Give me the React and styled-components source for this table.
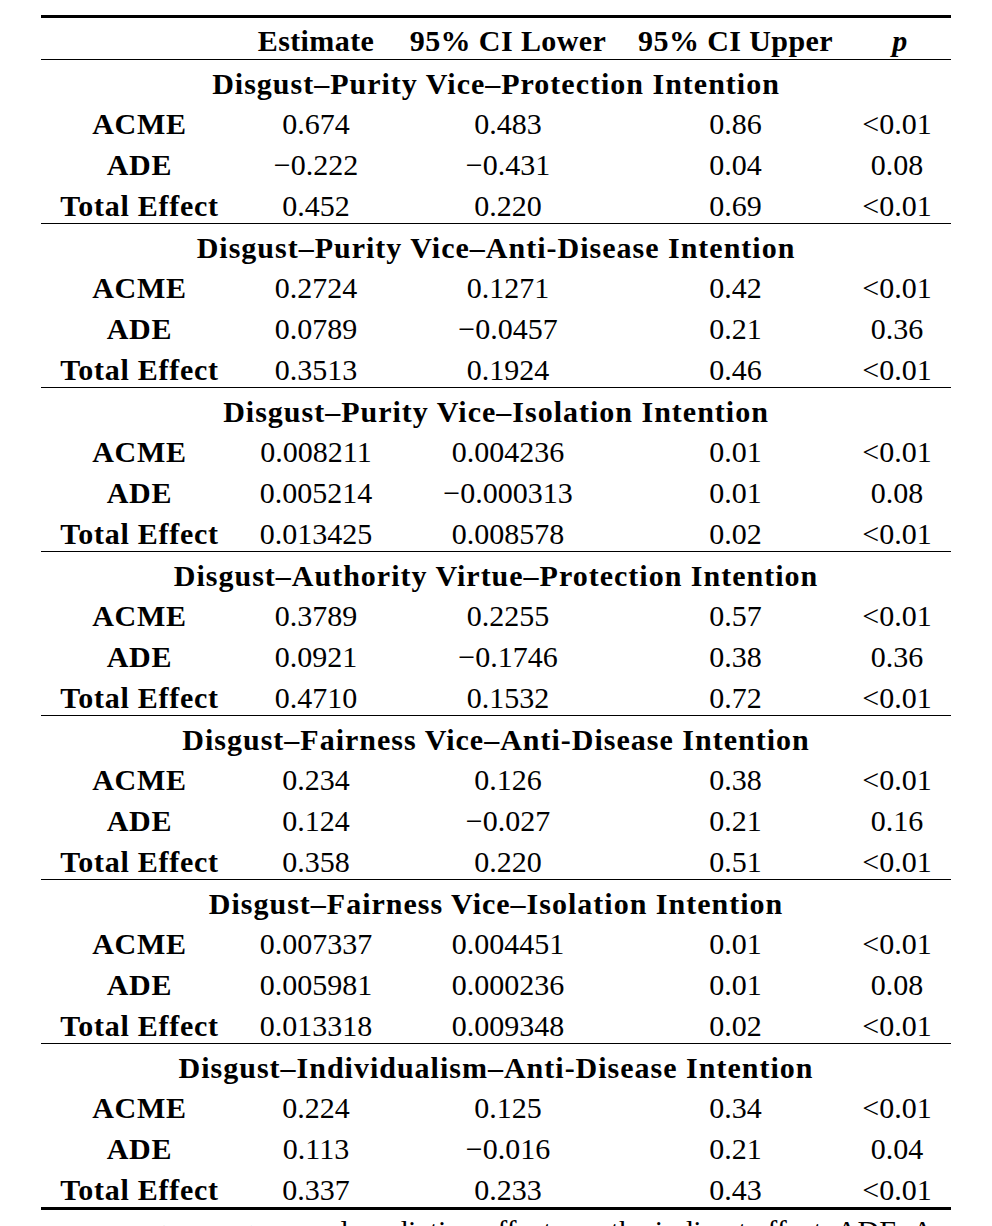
import React from "react";
import styled, { createGlobalStyle } from "styled-components";

const Global = createGlobalStyle`
  html, body { margin: 0; padding: 0; background: #fff; }
  body { font-family: "Liberation Serif", "Times New Roman", serif; color: #000; }
`;

const Page = styled.div`
  width: 992px;
  height: 1226px;
  overflow: hidden;
  padding: 15px 0 0 41px;
  box-sizing: border-box;
`;

const Table = styled.div`
  width: 910px;
  display: flex;
  flex-direction: column;
  border-top: 3px solid #000;
  border-bottom: 3px solid #000;
`;

const Row = styled.div`
  display: grid;
  grid-template-columns: 197px 156px 228px 227px 102px;
  height: 41px;
  box-sizing: border-box;
  font-size: 30px;
  line-height: 35px;
  padding-top: ${(p) => (p.$head ? 5 : 6)}px;
  font-weight: ${(p) => (p.$head ? 700 : 400)};
  letter-spacing: ${(p) => (p.$head ? "0.4px" : "0")};
`;

const Cell = styled.div`
  text-align: center;
  white-space: nowrap;
  font-weight: ${(p) => (p.$bold ? 700 : "inherit")};
  font-style: ${(p) => (p.$italic ? "italic" : "normal")};
  letter-spacing: ${(p) => (p.$bold ? "0.75px" : "inherit")};
  transform: translateX(${(p) => p.$dx || 0}px);
`;

const SectionTitle = styled.div`
  height: 41px;
  box-sizing: border-box;
  border-top: 1.5px solid #000;
  font-size: 30px;
  font-weight: 700;
  line-height: 35px;
  padding-top: 6px;
  letter-spacing: 1px;
  text-align: center;
  white-space: nowrap;
`;

const Caption = styled.p`
  margin: 4px 0 0 0;
  font-size: 30px;
  line-height: 34px;
  white-space: nowrap;
  padding-left: 43px;
`;

const sections = [
  {
    title: "Disgust–Purity Vice–Protection Intention",
    rows: [
      ["ACME", "0.674", "0.483", "0.86", "<0.01"],
      ["ADE", "−0.222", "−0.431", "0.04", "0.08"],
      ["Total Effect", "0.452", "0.220", "0.69", "<0.01"],
    ],
  },
  {
    title: "Disgust–Purity Vice–Anti-Disease Intention",
    rows: [
      ["ACME", "0.2724", "0.1271", "0.42", "<0.01"],
      ["ADE", "0.0789", "−0.0457", "0.21", "0.36"],
      ["Total Effect", "0.3513", "0.1924", "0.46", "<0.01"],
    ],
  },
  {
    title: "Disgust–Purity Vice–Isolation Intention",
    rows: [
      ["ACME", "0.008211", "0.004236", "0.01", "<0.01"],
      ["ADE", "0.005214", "−0.000313", "0.01", "0.08"],
      ["Total Effect", "0.013425", "0.008578", "0.02", "<0.01"],
    ],
  },
  {
    title: "Disgust–Authority Virtue–Protection Intention",
    rows: [
      ["ACME", "0.3789", "0.2255", "0.57", "<0.01"],
      ["ADE", "0.0921", "−0.1746", "0.38", "0.36"],
      ["Total Effect", "0.4710", "0.1532", "0.72", "<0.01"],
    ],
  },
  {
    title: "Disgust–Fairness Vice–Anti-Disease Intention",
    rows: [
      ["ACME", "0.234", "0.126", "0.38", "<0.01"],
      ["ADE", "0.124", "−0.027", "0.21", "0.16"],
      ["Total Effect", "0.358", "0.220", "0.51", "<0.01"],
    ],
  },
  {
    title: "Disgust–Fairness Vice–Isolation Intention",
    rows: [
      ["ACME", "0.007337", "0.004451", "0.01", "<0.01"],
      ["ADE", "0.005981", "0.000236", "0.01", "0.08"],
      ["Total Effect", "0.013318", "0.009348", "0.02", "<0.01"],
    ],
  },
  {
    title: "Disgust–Individualism–Anti-Disease Intention",
    rows: [
      ["ACME", "0.224", "0.125", "0.34", "<0.01"],
      ["ADE", "0.113", "−0.016", "0.21", "0.04"],
      ["Total Effect", "0.337", "0.233", "0.43", "<0.01"],
    ],
  },
];

export default function App() {
  return (
    <>
      <Global />
      <Page>
        <Table>
          <Row $head>
            <Cell />
            <Cell>Estimate</Cell>
            <Cell>95% CI Lower</Cell>
            <Cell>95% CI Upper</Cell>
            <Cell $italic>p</Cell>
          </Row>
          {sections.map((s) => (
            <React.Fragment key={s.title}>
              <SectionTitle>{s.title}</SectionTitle>
              {s.rows.map((r) => (
                <Row key={r[0]}>
                  <Cell $bold>{r[0]}</Cell>
                  <Cell>{r[1]}</Cell>
                  <Cell>{r[2]}</Cell>
                  <Cell>{r[3]}</Cell>
                  <Cell $dx={-3}>{r[4]}</Cell>
                </Row>
              ))}
            </React.Fragment>
          ))}
        </Table>
        <Caption>
          among average causal mediation effects, as the indirect effect; ADE: Average direct effect.
        </Caption>
      </Page>
    </>
  );
}
